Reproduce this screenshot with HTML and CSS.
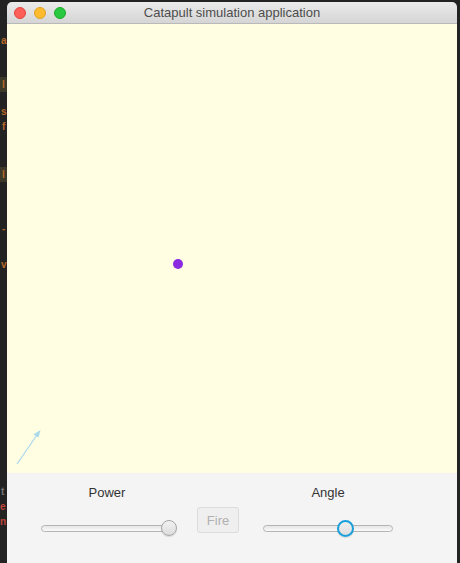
FILE: index.html
```html
<!DOCTYPE html>
<html>
<head>
<meta charset="utf-8">
<link rel="stylesheet" href="styles.css">
</head>
<body>
<div class="desktop">
  <span class="frag frag-or f1">a</span>
  <span class="frag frag-hl f2">l</span>
  <span class="frag frag-or f3">s</span>
  <span class="frag frag-or f4">f</span>
  <span class="frag frag-hl f5">l</span>
  <span class="frag frag-or f6">-</span>
  <span class="frag frag-or f7">v</span>
  <span class="frag frag-gr f8">t</span>
  <span class="frag frag-red f9">e</span>
  <span class="frag frag-red f10">n</span>

  <div class="window">
    <div class="titlebar">
      <div class="lights">
        <span class="light red"></span>
        <span class="light yellow"></span>
        <span class="light green"></span>
      </div>
      <div class="title">Catapult simulation application</div>
    </div>
    <div class="canvas">
      <svg class="scene" width="450" height="449" viewBox="0 0 450 449">
        <circle cx="171" cy="240" r="5" fill="#8a2be2"/>
        <line x1="10" y1="440" x2="32" y2="408" stroke="#a9d8ea" stroke-width="1.3"/>
        <path d="M33.5 406 L26.5 410.5 L31.5 413.5 Z" fill="#a9d8ea"/>
      </svg>
    </div>
    <div class="panel">
      <div class="group power">
        <div class="label">Power</div>
        <div class="slider">
          <div class="track"></div>
          <div class="thumb thumb-power"></div>
        </div>
      </div>
      <button class="fire" disabled>Fire</button>
      <div class="group angle">
        <div class="label">Angle</div>
        <div class="slider">
          <div class="track"></div>
          <div class="thumb thumb-angle focused"></div>
        </div>
      </div>
    </div>
  </div>
</div>
</body>
</html>
```

FILE: styles.css
```css
html, body {
  margin: 0;
  padding: 0;
  background: #232323;
  width: 460px;
  height: 563px;
  overflow: hidden;
}

.desktop {
  position: relative;
  width: 460px;
  height: 563px;
  font-family: "Liberation Sans", Arial, sans-serif;
}

.frag {
  position: absolute;
  font-family: "Liberation Sans", Arial, sans-serif;
  font-size: 10px;
  font-weight: bold;
  line-height: 11px;
}
.frag-or { color: #b5682a; }
.frag-hl { color: #b5682a; background: #3d3a2a; padding: 2px 2px; }
.frag-gr { color: #777; }
.frag-red { color: #c0433a; }
.f1 { left: 1px; top: 35px; }
.f2 { left: 0; top: 77px; }
.f3 { left: 1px; top: 106px; }
.f4 { left: 2px; top: 121px; }
.f5 { left: 0; top: 167px; }
.f6 { left: 2px; top: 223px; }
.f7 { left: 1px; top: 259px; }
.f8 { left: 1px; top: 486px; }
.f9 { left: 0; top: 501px; }
.f10 { left: 0; top: 516px; }

.window {
  position: absolute;
  left: 7px;
  top: 2px;
  width: 450px;
  height: 561px;
  display: flex;
  flex-direction: column;
  border-radius: 5px 5px 0 0;
  overflow: hidden;
}

.titlebar {
  height: 21px;
  flex: none;
  display: flex;
  align-items: center;
  position: relative;
  background: linear-gradient(#ebebeb, #d5d5d5);
  border-bottom: 1px solid #b9b9b9;
}

.lights {
  display: flex;
  gap: 8px;
  padding-left: 7px;
  z-index: 1;
}

.light {
  width: 12px;
  height: 12px;
  border-radius: 50%;
  box-sizing: border-box;
}
.red { background: #fc5f57; border: 0.5px solid #e0443e; }
.yellow { background: #fdbc2e; border: 0.5px solid #dea123; }
.green { background: #28c840; border: 0.5px solid #1aab29; }

.title {
  position: absolute;
  left: 0;
  right: 0;
  top: 0;
  bottom: 0;
  text-align: center;
  line-height: 22px;
  font-size: 13px;
  color: #4d4d4d;
  font-family: "Liberation Sans", Arial, sans-serif;
}

.canvas {
  height: 449px;
  flex: none;
  background: #fffee2;
}

.scene {
  display: block;
}

.panel {
  flex: 1;
  background: #f4f4f4;
  display: flex;
  align-items: flex-start;
  padding: 12px 0 0 34px;
  gap: 24px;
}

.group {
  display: flex;
  flex-direction: column;
  align-items: center;
}
.power { width: 132px; }
.angle { width: 130px; }

.label {
  font-size: 13px;
  line-height: 16px;
  color: #333;
  font-family: "Liberation Sans", Arial, sans-serif;
}

.slider {
  position: relative;
  width: 100%;
  height: 17px;
  margin-top: 19px;
}

.track {
  position: absolute;
  left: 0;
  right: 0;
  top: 5px;
  height: 7px;
  box-sizing: border-box;
  border: 1px solid #b4b4b4;
  border-radius: 4px;
  background: linear-gradient(#e6e6e6, #fafafa);
}

.thumb {
  position: absolute;
  top: 0;
  width: 16px;
  height: 16px;
  box-sizing: border-box;
  border-radius: 50%;
  border: 1px solid #a6a6a6;
  background: linear-gradient(#f2f2f2, #dcdcdc);
  box-shadow: 0 1px 1px rgba(0,0,0,0.12);
}
.thumb-power { left: 120px; }
.thumb-angle {
  left: 74px;
  width: 17px;
  height: 17px;
}
.focused {
  border: 2px solid #1a9fdb;
  background: linear-gradient(#f0f0f0, #dedede);
}

.fire {
  margin-top: 22px;
  width: 42px;
  height: 26px;
  padding: 0;
  box-sizing: border-box;
  border: 1px solid #dcdcdc;
  border-radius: 3px;
  background: #efefef;
  color: #b1b1b1;
  font-size: 13px;
  font-family: "Liberation Sans", Arial, sans-serif;
}
```
